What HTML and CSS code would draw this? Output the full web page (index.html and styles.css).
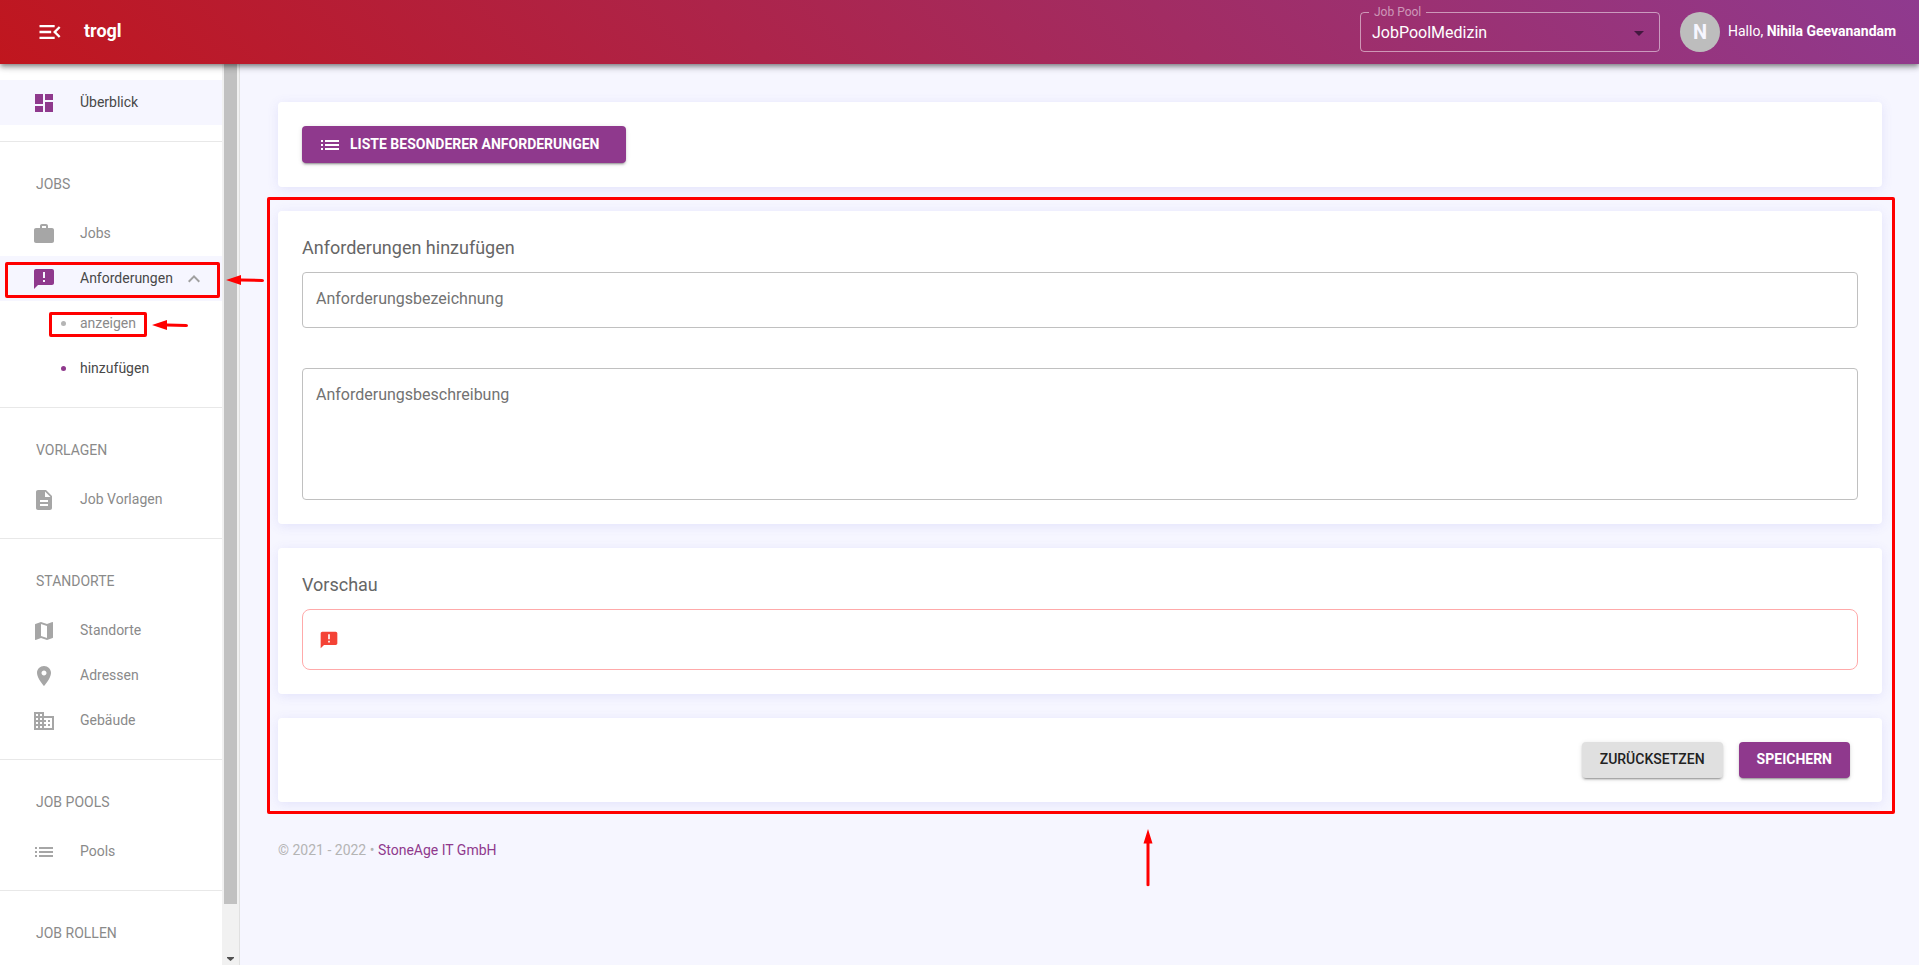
FILE: index.html
```html
<!DOCTYPE html>
<html lang="de">
<head>
<meta charset="utf-8">
<meta name="viewport" content="width=device-width, initial-scale=1">
<title>trogl – Anforderungen hinzufügen</title>
<link rel="stylesheet" href="styles.css">
</head>
<body class="app">
<svg class="sprite" aria-hidden="true">
  <symbol id="i-menu" viewBox="0 0 24 24"><path d="M3 18h13v-2H3v2zm0-5h10v-2H3v2zm0-7v2h13V6H3zm18 9.59L17.42 12 21 8.41 19.59 7l-5 5 5 5L21 15.59z"/></symbol>
  <symbol id="i-dashboard" viewBox="0 0 24 24"><path d="M3 13h8V3H3v10zm0 8h8v-6H3v6zm10 0h8V11h-8v10zm0-18v6h8V3h-8z"/></symbol>
  <symbol id="i-work" viewBox="0 0 24 24"><path d="M20 6h-4V4c0-1.11-.89-2-2-2h-4c-1.11 0-2 .89-2 2v2H4c-1.11 0-1.99.89-1.99 2L2 19c0 1.11.89 2 2 2h16c1.11 0 2-.89 2-2V8c0-1.11-.89-2-2-2zm-6 0h-4V4h4v2z"/></symbol>
  <symbol id="i-alert" viewBox="0 0 24 24"><path d="M20 2H4c-1.1 0-1.99.9-1.99 2L2 22l4-4h14c1.1 0 2-.9 2-2V4c0-1.1-.9-2-2-2zm-7 9h-2V5h2v6zm0 4h-2v-2h2v2z"/></symbol>
  <symbol id="i-less" viewBox="0 0 24 24"><path d="M12 8l-6 6 1.41 1.41L12 10.83l4.59 4.58L18 14z"/></symbol>
  <symbol id="i-doc" viewBox="0 0 24 24"><path d="M14 2H6c-1.1 0-1.99.9-1.99 2L4 20c0 1.1.89 2 1.99 2H18c1.1 0 2-.9 2-2V8l-6-6zm2 16H8v-2h8v2zm0-4H8v-2h8v2zm-3-5V3.5L18.5 9H13z"/></symbol>
  <symbol id="i-map" viewBox="0 0 24 24"><path d="M20.5 3l-.16.03L15 5.1 9 3 3.36 4.9c-.21.07-.36.25-.36.48V20.5c0 .28.22.5.5.5l.16-.03L9 18.9l6 2.1 5.64-1.9c.21-.07.36-.25.36-.48V3.5c0-.28-.22-.5-.5-.5zM15 19l-6-2.11V5l6 2.11V19z"/></symbol>
  <symbol id="i-pin" viewBox="0 0 24 24"><path d="M12 2C8.13 2 5 5.13 5 9c0 5.25 7 13 7 13s7-7.75 7-13c0-3.87-3.13-7-7-7zm0 9.500c-1.38 0-2.500-1.120-2.500-2.500s1.120-2.500 2.500-2.500 2.500 1.120 2.500 2.500-1.120 2.500-2.500 2.500z"/></symbol>
  <symbol id="i-building" viewBox="0 0 24 24"><path d="M12 7V3H2v18h20V7H12zM6 19H4v-2h2v2zm0-4H4v-2h2v2zm0-4H4V9h2v2zm0-4H4V5h2v2zm4 12H8v-2h2v2zm0-4H8v-2h2v2zm0-4H8V9h2v2zm0-4H8V5h2v2zm10 12h-8v-2h2v-2h-2v-2h2v-2h-2V9h8v10zm-2-8h-2v2h2v-2zm0 4h-2v2h2v-2z"/></symbol>
  <symbol id="i-list" viewBox="0 0 24 24"><path d="M3 13h2v-2H3v2zm0 4h2v-2H3v2zm0-8h2V7H3v2zm4 4h14v-2H7v2zm0 4h14v-2H7v2zM7 7v2h14V7H7z"/></symbol>
</svg>

<header class="topbar">
  <button class="menu-button" type="button" aria-label="Menü einklappen"><svg class="menu-icon"><use href="#i-menu"/></svg></button>
  <a class="brand" href="#">trogl</a>
  <fieldset class="pool">
    <legend class="pool-legend"><label for="pool">Job Pool</label></legend>
    <select class="pool-select" id="pool"><option>JobPoolMedizin</option></select>
  </fieldset>
  <span class="avatar">N</span>
  <span class="greeting">Hallo, <b>Nihila Geevanandam</b></span>
</header>

<div class="shell">
  <aside class="sidebar">
    <nav class="nav">
      <div class="group">
        <a class="item active" href="#"><svg class="icon"><use href="#i-dashboard"/></svg><span>Überblick</span></a>
      </div>
      <div class="group">
        <h2 class="heading">JOBS</h2>
        <a class="item" href="#"><svg class="icon"><use href="#i-work"/></svg><span>Jobs</span></a>
        <a class="item active" href="#"><svg class="icon"><use href="#i-alert"/></svg><span>Anforderungen</span><svg class="chevron"><use href="#i-less"/></svg>
          <i class="mark mark-parent"></i><svg class="arrow arrow-parent" viewBox="0 0 38 12"><path d="M0 6 15 1v3.500L36 5q2 0 2 1.500T36 8L15 7.500V11z"/></svg></a>
        <a class="item sub" href="#"><i class="dot"></i><span>anzeigen</span>
          <i class="mark mark-child"></i><svg class="arrow arrow-child" viewBox="0 0 38 12"><path d="M0 6 15 1v3.500L34 5q2 0 2 1.500T34 8L15 7.500V11z"/></svg></a>
        <a class="item sub current" href="#"><i class="dot"></i><span>hinzufügen</span></a>
      </div>
      <div class="group">
        <h2 class="heading">VORLAGEN</h2>
        <a class="item" href="#"><svg class="icon"><use href="#i-doc"/></svg><span>Job Vorlagen</span></a>
      </div>
      <div class="group">
        <h2 class="heading">STANDORTE</h2>
        <a class="item" href="#"><svg class="icon"><use href="#i-map"/></svg><span>Standorte</span></a>
        <a class="item" href="#"><svg class="icon"><use href="#i-pin"/></svg><span>Adressen</span></a>
        <a class="item" href="#"><svg class="icon"><use href="#i-building"/></svg><span>Gebäude</span></a>
      </div>
      <div class="group">
        <h2 class="heading">JOB POOLS</h2>
        <a class="item" href="#"><svg class="icon"><use href="#i-list"/></svg><span>Pools</span></a>
      </div>
      <div class="group">
        <h2 class="heading">JOB ROLLEN</h2>
      </div>
    </nav>
    <div class="scrollbar" aria-hidden="true">
      <div class="thumb"></div>
      <svg class="scroll-down" viewBox="0 0 17 17"><path d="M5 9h7v1L8.500 13 5 10z"/></svg>
    </div>
  </aside>

  <main class="content">
    <section class="card">
      <button class="button primary with-icon" type="button"><svg class="icon"><use href="#i-list"/></svg><span>LISTE BESONDERER ANFORDERUNGEN</span></button>
    </section>

    <form class="form">
      <section class="card">
        <h1 class="title">Anforderungen hinzufügen</h1>
        <div class="field">
          <input class="input" id="name" type="text">
          <label class="label" for="name">Anforderungsbezeichnung</label>
        </div>
        <div class="field">
          <textarea class="input area" id="description"></textarea>
          <label class="label" for="description">Anforderungsbeschreibung</label>
        </div>
      </section>
      <section class="card">
        <h2 class="title">Vorschau</h2>
        <div class="preview"><svg class="preview-icon"><use href="#i-alert"/></svg></div>
      </section>
      <section class="card actions">
        <button class="button" type="reset">ZURÜCKSETZEN</button>
        <button class="button primary" type="submit">SPEICHERN</button>
      </section>
      <i class="mark mark-form"></i>
      <svg class="arrow arrow-form" viewBox="0 0 10 58"><path d="M5 0 9.500 14.500h-3V56.500q-1.500 1.500-3 0V14.500h-3z"/></svg>
    </form>

    <footer class="footer">© 2021 - 2022 • <a class="footer-link" href="#">StoneAge IT GmbH</a></footer>
  </main>
</div>
</body>
</html>
```

FILE: styles.css
```css
*, *::before, *::after { box-sizing: border-box; }

.app {
  --purple: #8f398d;
  --red: #ff0000;
  margin: 0;
  height: 100vh;
  display: flex;
  flex-direction: column;
  overflow: hidden;
  background: #f6f6ff;
  color: #666;
  font: 14px/20px Roboto, "Liberation Sans", sans-serif;
}

.sprite { display: none; }
svg { fill: currentColor; flex: none; }
a { color: inherit; text-decoration: none; }
button, input, textarea, select { font: inherit; color: inherit; }

/* Top bar */
.topbar {
  position: relative;
  z-index: 2;
  flex: none;
  display: flex;
  align-items: center;
  height: 64px;
  padding: 0 19px 0 32px;
  color: #fff;
  background: linear-gradient(45deg, #c0161e, #8f3a8f);
  box-shadow: 0 2px 4px -1px rgba(0, 0, 0, .3), 0 4px 5px rgba(0, 0, 0, .2), 0 1px 10px rgba(0, 0, 0, .16);
}
.menu-button {
  display: flex;
  padding: 4px;
  border: 0;
  background: none;
}
.menu-icon { width: 28px; height: 28px; }
.brand {
  margin: 0 auto 2px 16px;
  font-size: 18px;
  font-weight: 700;
}
.pool {
  position: relative;
  align-self: flex-end;
  width: 300px;
  height: 47px;
  margin: 0 20px 12px 0;
  padding: 0 0 0 8px;
  border: 1px solid rgba(255, 255, 255, .5);
  border-radius: 4px;
}
.pool-legend {
  padding: 0 5px;
  font-size: 12px;
  line-height: 14px;
  color: rgba(255, 255, 255, .5);
}
.pool-select {
  display: block;
  width: 100%;
  height: 28px;
  padding: 0 3px;
  border: 0;
  appearance: none;
  font-size: 16px;
  background: none;
}
.pool::after {
  content: "";
  position: absolute;
  right: 15px;
  top: 12px;
  border: 5px solid transparent;
  border-top-color: #43183f;
  border-bottom: 0;
  pointer-events: none;
}
.avatar {
  display: grid;
  place-items: center;
  width: 40px;
  height: 40px;
  margin-right: 8px;
  border-radius: 50%;
  background: #bdbdbd;
  color: #f6f6ff;
  font-size: 20px;
  font-weight: 700;
}
.greeting { min-width: 172px; padding-bottom: 2px; white-space: nowrap; }

/* Shell */
.shell { flex: 1; min-height: 0; display: flex; }
.sidebar {
  position: relative;
  z-index: 1;
  flex: none;
  display: flex;
  width: 240px;
  background: #fff;
  border-right: 1px solid #e0e0e0;
}
.nav { flex: 1; min-width: 0; }
.group { padding: 16px 0; }
.group + .group { border-top: 1px solid #e8e8e8; }
.group:last-child { padding-bottom: 0; }
.heading {
  margin: 0;
  padding: 16px 36px 17px;
  font-size: 14px;
  font-weight: 400;
  line-height: 20px;
  color: #8a8a8a;
}
.item {
  position: relative;
  display: flex;
  align-items: center;
  height: 45px;
  padding-left: 32px;
  color: #8a8a8a;
}
.item span { padding-bottom: 2px; }
.icon { width: 24px; height: 24px; }
.item .icon { margin-right: 24px; color: #a6a6a6; }
.active { background: #f6f6ff; color: #484848; }
.item.active .icon { color: var(--purple); }
.chevron { width: 24px; height: 24px; margin-left: 9px; color: #a0a0a0; }
.sub { padding-left: 61px; }
.dot {
  width: 5px;
  height: 5px;
  margin-right: 14px;
  border-radius: 50%;
  background: #b5b5b5;
}
.current { color: #484848; }
.current .dot { background: var(--purple); }

.scrollbar {
  display: flex;
  flex-direction: column;
  justify-content: space-between;
  width: 17px;
  background: #f1f1f1;
}
.thumb { height: 93.230%; margin: 0 2px; background: #c1c1c1; }
.scroll-down { width: 17px; height: 17px; color: #505050; }

/* Content */
.content {
  flex: 1;
  min-width: 0;
  padding: 38px 37px 0 38px;
}
.card {
  padding: 24px;
  border-radius: 4px;
  background: #fff;
  box-shadow: 0 2px 12px rgba(90, 90, 220, .12);
}
.content > .card { margin-bottom: 24px; }
.form {
  position: relative;
  display: flex;
  flex-direction: column;
  gap: 24px;
}
.title {
  margin: 0;
  padding: 1px 0 12px;
  font-size: 18px;
  font-weight: 400;
  line-height: 24px;
}
.field { position: relative; }
.field + .field { margin-top: 40px; }
.input {
  display: block;
  width: 100%;
  height: 56px;
  padding: 16px 14px;
  border: 1px solid #c0c0c0;
  border-radius: 4px;
  background: none;
  font-size: 16px;
  resize: none;
}
.area { height: 132px; }
.label {
  position: absolute;
  left: 14px;
  top: 15px;
  font-size: 16px;
  line-height: 24px;
  color: #727272;
}
.preview {
  padding: 20px 16px 19px;
  border: 1px solid #faa;
  border-radius: 8px;
}
.preview-icon { display: block; width: 20px; height: 20px; color: #f44336; }

.button {
  display: inline-flex;
  align-items: center;
  height: 36px;
  padding: 0 18px 2px;
  border: 0;
  border-radius: 4px;
  background: #e0e0e0;
  color: #222;
  font-weight: 500;
  box-shadow: 0 3px 1px -2px rgba(0, 0, 0, .2), 0 2px 2px rgba(0, 0, 0, .14), 0 1px 5px rgba(0, 0, 0, .12);
}
.primary { background: var(--purple); color: #fff; font-weight: 700; }
.with-icon { display: flex; min-width: 324px; height: 37px; padding: 0 16px; gap: 8px; }
.with-icon span { padding-bottom: 2px; }
.actions { display: flex; justify-content: flex-end; gap: 16px; padding-right: 32px; }

.footer { padding-top: 38px; color: #b4b4b4; }
.footer-link { color: var(--purple); }

/* Annotations over the page */
.mark { position: absolute; border: 3px solid var(--red); border-radius: 2px; pointer-events: none; }
.arrow { position: absolute; color: var(--red); pointer-events: none; }
.mark-parent { inset: 6px 2px 3px 5px; }
.mark-child { left: 49px; top: 11px; width: 98px; height: 25px; }
.mark-form { inset: -14px -13px -12px -11px; }
.arrow-parent { left: 226px; top: 18px; width: 38px; height: 12px; }
.arrow-child { left: 152px; top: 18px; width: 38px; height: 12px; }
.arrow-form { left: calc(54% - 1px); top: calc(100% + 27px); width: 10px; height: 58px; }
```
